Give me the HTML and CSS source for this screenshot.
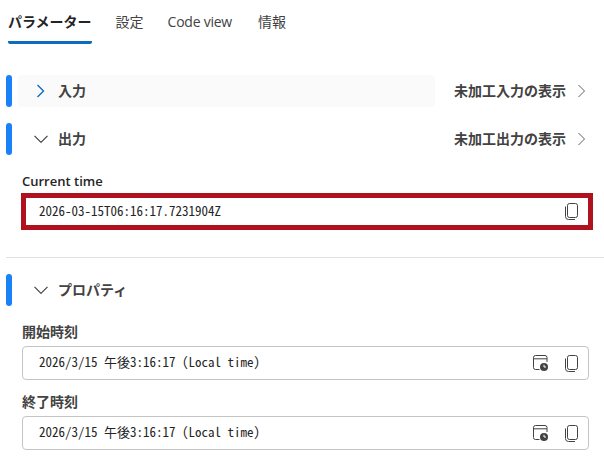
FILE: index.html
```html
<!DOCTYPE html>
<html lang="ja">
<head>
<meta charset="utf-8">
<title>パラメーター</title>
<link rel="stylesheet" href="styles.css">
</head>
<body>
<svg class="defs" width="0" height="0" aria-hidden="true">
  <symbol id="copy" viewBox="0 0 13 17">
    <path d="M4.500.5h6a2 2 0 0 1 2 2v10a2 2 0 0 1-2 2h-6a2 2 0 0 1-2-2v-10a2 2 0 0 1 2-2Z" fill="none" stroke="#424242"/>
    <path d="M.5 3.500v10a3 3 0 0 0 3 3h6.500" fill="none" stroke="#424242"/>
  </symbol>
  <symbol id="cal" viewBox="0 0 16 16">
    <path d="M6.500 14.500H2.500a2 2 0 0 1-2-2v-10a2 2 0 0 1 2-2h9.500a2 2 0 0 1 2 2V7M.5 3.800h13.500" fill="none" stroke="#424242"/>
    <circle cx="11" cy="12" r="4" fill="#424242"/>
    <path d="M11 9.800V12h2" fill="none" stroke="#fff"/>
  </symbol>
</svg>
<nav class="tabs">
  <span class="tab active">パラメーター</span>
  <span class="tab">設定</span>
  <span class="tab tab-latin">Code view</span>
  <span class="tab">情報</span>
</nav>
<main class="content">
  <section class="row">
    <span class="marker"></span>
    <div class="head head-shaded">
      <svg class="chev" width="12" height="16" viewBox="0 0 12 16"><path d="M2.500 2 8.500 8l-6 6" fill="none" stroke="#0f6cbd" stroke-width="1.400"/></svg>
      <span class="title">入力</span>
    </div>
    <div class="raw"><span class="raw-text">未加工入力の表示</span><svg width="9" height="14" viewBox="0 0 9 14"><path d="m1.500 1 6 6-6 6" fill="none" stroke="#616161"/></svg></div>
  </section>
  <section class="row">
    <span class="marker"></span>
    <div class="head">
      <svg class="chev-down" width="14" height="8" viewBox="0 0 14 8"><path d="m.5.800 6.500 6.500L13.500.8" fill="none" stroke="#424242" stroke-width="1.200"/></svg>
      <span class="title">出力</span>
    </div>
    <div class="raw"><span class="raw-text">未加工出力の表示</span><svg width="9" height="14" viewBox="0 0 9 14"><path d="m1.500 1 6 6-6 6" fill="none" stroke="#616161"/></svg></div>
  </section>
  <div class="field field-output">
    <label class="label label-latin">Current time</label>
    <div class="box box-red">
      <span class="value">2026-03-15T06:16:17.7231904Z</span>
      <svg class="icon" width="13" height="17"><use href="#copy"/></svg>
    </div>
  </div>
  <hr class="divider">
  <section class="row">
    <span class="marker"></span>
    <div class="head">
      <svg class="chev-down" width="14" height="8" viewBox="0 0 14 8"><path d="m.5.800 6.500 6.500L13.500.8" fill="none" stroke="#424242" stroke-width="1.200"/></svg>
      <span class="title">プロパティ</span>
    </div>
  </section>
  <div class="field">
    <label class="label">開始時刻</label>
    <div class="box">
      <span class="value">2026/3/15 午後3:16:17 (Local time)</span>
      <svg class="icon" width="16" height="16"><use href="#cal"/></svg>
      <svg class="icon" width="13" height="17"><use href="#copy"/></svg>
    </div>
  </div>
  <div class="field">
    <label class="label">終了時刻</label>
    <div class="box">
      <span class="value">2026/3/15 午後3:16:17 (Local time)</span>
      <svg class="icon" width="16" height="16"><use href="#cal"/></svg>
      <svg class="icon" width="13" height="17"><use href="#copy"/></svg>
    </div>
  </div>
</main>
</body>
</html>
```
FILE: styles.css
```css
* { box-sizing: border-box; }
html, body { margin: 0; padding: 0; }
body {
  width: 604px;
  height: 465px;
  overflow: hidden;
  background: #fff;
  color: #242424;
  font-family: "Noto Sans CJK JP", "Noto Sans", sans-serif;
  font-size: 14px;
}
.defs { position: absolute; }
.tabs {
  display: flex;
  gap: 24px;
  height: 44px;
  padding-left: 8px;
}
.tab {
  height: 44px;
  padding-top: 11px;
  line-height: 20px;
  font-size: 14px;
  color: #424242;
}
.tab-latin {
  padding-top: 12px;
  font-family: "Open Sans", "Noto Sans CJK JP", sans-serif;
  letter-spacing: -0.25px;
  margin-right: 2px;
}
.tab.active {
  font-weight: 700;
  color: #242424;
  border-bottom: 3px solid #0f6cbd;
  border-radius: 2px;
}
.content {
  padding: 31px 15px 0 6px;
}
.row {
  display: flex;
  align-items: center;
  height: 32px;
  margin-bottom: 16px;
}
.marker {
  width: 6px;
  height: 32px;
  border-radius: 3px;
  background: #1a82f7;
  flex: none;
}
.head {
  display: flex;
  align-items: center;
  flex: 1;
  height: 32px;
  margin-left: 6px;
  padding-left: 16px;
  border-radius: 4px;
}
.head-shaded {
  flex: none;
  width: 417px;
  padding-left: 17px;
  background: #fafafa;
}
.chev { margin-right: 11px; }
.chev-down { margin-right: 10px; }
.title {
  padding-bottom: 2px;
  font-weight: 700;
  font-size: 14px;
  line-height: 20px;
  color: #424242;
}
.raw {
  display: flex;
  align-items: center;
  gap: 11px;
  margin-left: auto;
  margin-right: 3px;
  font-weight: 700;
  font-size: 14px;
  color: #424242;
}
.raw-text {
  padding-bottom: 2px;
}
.field {
  margin: 0 0 12px 16px;
}
.label {
  display: block;
  height: 20px;
  margin-bottom: 4px;
  line-height: 18px;
  font-size: 14px;
  font-weight: 700;
  color: #424242;
}
.label-latin {
  height: 17px;
  margin: 0 0 3px 1px;
  line-height: 17px;
  font-family: "Open Sans", "Noto Sans CJK JP", sans-serif;
  font-size: 13px;
  font-weight: 600;
  color: #242424;
}
.field-output {
  margin: 18px -4px 0 15px;
}
.box {
  display: flex;
  align-items: center;
  gap: 16px;
  height: 34px;
  padding: 0 10px 0 16px;
  border: 1px solid #c4c4c4;
  border-radius: 4px;
}
.box-red {
  height: 37px;
  padding-left: 13px;
  border: 5px solid #b0111e;
  border-radius: 0;
}
.value {
  flex: 1;
  padding-bottom: 4px;
  font-family: "Noto Sans Mono CJK JP", "Liberation Mono", "Noto Sans CJK JP", monospace;
  font-size: 13px;
  color: #242424;
  white-space: nowrap;
}
.box-red .value {
  padding-bottom: 2px;
}
.icon {
  flex: none;
  display: block;
}
.divider {
  margin: 27px -15px 16px 0;
  border: 0;
  border-top: 1px solid #e0e0e0;
}
```
